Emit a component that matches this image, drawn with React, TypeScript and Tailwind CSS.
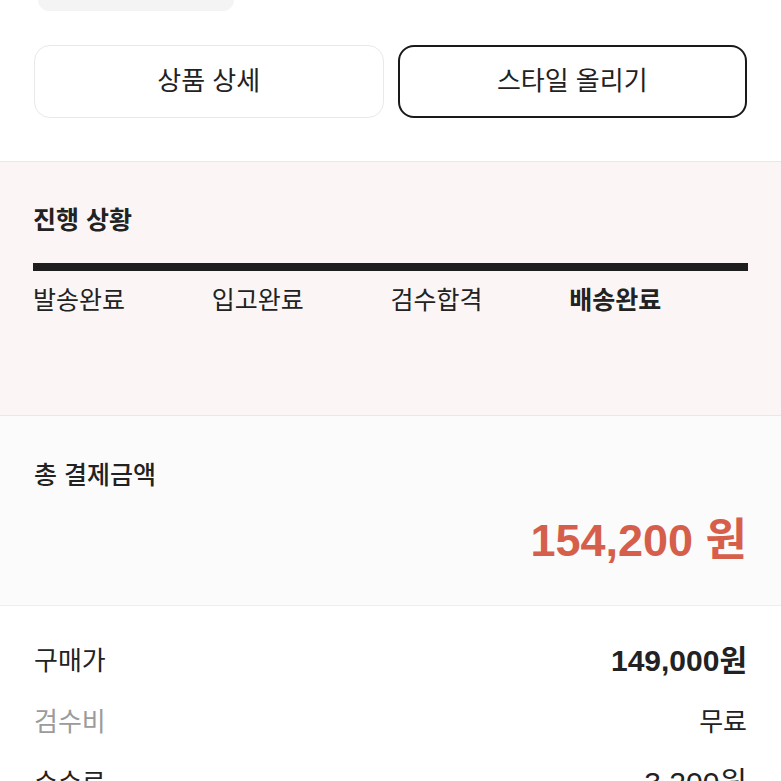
const steps = [
    { label: "발송완료", active: false },
    { label: "입고완료", active: false },
    { label: "검수합격", active: false },
    { label: "배송완료", active: true },
];

const rows = [
    { label: "구매가", value: "149,000원", muted: false, valueClass: "text-[30px] font-bold" },
    { label: "검수비", value: "무료", muted: true, valueClass: "" },
    { label: "수수료", value: "3,200원", muted: false, valueClass: "text-[30px]" },
];

export default function App() {
    return (
        <div className="min-h-[781px] bg-white text-[#222] font-['Liberation_Sans','Noto_Sans_CJK_KR',sans-serif]">
            {/* Cut-off pill */}
            <div className="ml-[38px] h-[11px] w-[196px] rounded-b-[14px] bg-[#f4f4f4]" />

            {/* Buttons */}
            <div className="mt-[34px] grid grid-cols-2 gap-[14px] px-[34px]">
                <button className="h-[73px] rounded-[16px] border-[1.5px] border-[#e9e9e9] bg-white text-[26px] text-[#222]">
                    상품 상세
                </button>
                <button className="h-[73px] rounded-[16px] border-2 border-[#1a1a1a] bg-white text-[26px] text-[#222]">
                    스타일 올리기
                </button>
            </div>

            {/* Progress */}
            <section className="mt-[43px] border-y-[1.5px] border-[#e8e8e8] bg-[#fbf6f5] px-[33px] pt-[42px] pb-[99px]">
                <h2 className="text-[25px] font-bold leading-[32px]">진행 상황</h2>
                <div className="mt-[27px] h-[8px] bg-[#1e1e1e]" />
                <div className="mt-[13px] grid grid-cols-4">
                    {steps.map((s) => (
                        <span
                            key={s.label}
                            className={`text-[25px] leading-[32px] ${s.active ? "font-bold" : ""}`}
                        >
                            {s.label}
                        </span>
                    ))}
                </div>
            </section>

            {/* Total */}
            <section className="border-b-[1.5px] border-[#ededed] bg-[#fbfbfb] px-[34px] pt-[43px] pb-[38px]">
                <h2 className="text-[25px] font-medium leading-[32px]">총 결제금액</h2>
                <div className="mt-[24px] text-right text-[45px] font-bold leading-[52px] text-[#d65f4b]">
                    154,200 원
                </div>
            </section>

            {/* Breakdown */}
            <section className="flex flex-col gap-[25px] bg-white px-[34px] pt-[37px]">
                {rows.map((r) => (
                    <div key={r.label} className="flex items-center justify-between text-[26px] leading-[36px]">
                        <span className={r.muted ? "text-[#9b9b9b]" : ""}>{r.label}</span>
                        <span className={r.valueClass}>{r.value}</span>
                    </div>
                ))}
            </section>
        </div>
    );
}
